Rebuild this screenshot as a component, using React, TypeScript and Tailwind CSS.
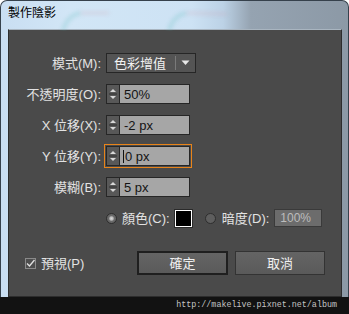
import React from "react";

const FONT = '"Liberation Sans","Noto Sans CJK TC",sans-serif';

function Spinner() {
  return (
    <div className="w-[14px] h-[20px] border border-[#262626] bg-[#585858] flex flex-col items-center justify-center">
      <svg width="12" height="18" viewBox="0 0 12 18">
        <path d="M3 7 L6 4 L9 7 Z" fill="#d8d8d8" />
        <line x1="2" y1="9" x2="10" y2="9" stroke="#2e2e2e" strokeWidth="1" />
        <path d="M3 11 L6 14 L9 11 Z" fill="#d8d8d8" />
      </svg>
    </div>
  );
}

function SpinInput({ value, caret }: { value: string; caret?: boolean }) {
  return (
    <div className="flex w-[84px] h-[20px]">
      <Spinner />
      <div className="flex-1 h-[20px] border border-l-0 border-[#262626] bg-[#a6a6a6] flex items-center pl-[4px] text-[13px] text-[#141414] leading-none">
        {caret && <span className="w-px h-[13px] bg-[#111] mr-[1px] -ml-[1px]" />}
        {value}
      </div>
    </div>
  );
}

function Label({ children }: { children: React.ReactNode }) {
  return (
    <div className="w-[97px] pr-[5px] text-right text-[13px] text-[#e2e2e2] leading-none whitespace-nowrap">
      {children}
    </div>
  );
}

export default function App() {
  return (
    <div className="w-[349px] h-[314px] bg-white overflow-hidden flex flex-col" style={{ fontFamily: FONT }}>
      <div className="h-[297px] rounded-t-[7px] border-t border-l border-r border-[#36414c] bg-[linear-gradient(90deg,#c9def2_0%,#d2e6f6_20%,#cde2f4_55%,#bcd2e6_64%,#95a3b1_72%,#8c99a6_100%)] flex flex-col relative overflow-hidden">
        <svg className="absolute left-0 top-0" width="349" height="30" viewBox="0 0 349 30">
          <defs>
            <filter id="b" x="-20%" y="-50%" width="140%" height="200%">
              <feGaussianBlur stdDeviation="2.2" />
            </filter>
          </defs>
          <g filter="url(#b)" opacity="0.3">
            <path d="M62 30 Q66 14 80 12" stroke="#4fb6b4" strokeWidth="3" fill="none" />
            <path d="M80 12 L108 12" stroke="#d28a9a" strokeWidth="2" fill="none" />
            <path d="M168 30 Q172 14 186 12" stroke="#4fb6b4" strokeWidth="3" fill="none" />
            <path d="M186 12 L226 13" stroke="#d28a9a" strokeWidth="2" fill="none" />
          </g>
        </svg>
        <div className="h-[28px] pl-[7px] pt-[6px] text-[12px] text-black leading-none relative">製作陰影</div>
        <div className="flex h-[268px]">
          <div className="w-[7px]" />
          <div className="w-[334px] h-[268px] border border-[#2d2d2d] border-t-[#a9b5c0] bg-[#4a4a4a] flex flex-col pt-[23px]">
            {/* 模式 */}
            <div className="flex items-center h-[20px]">
              <Label>模式(M):</Label>
              <div className="w-[90px] h-[20px] border border-[#262626] bg-[#545454] flex items-center text-[13px] text-[#f2f2f2] leading-none">
                <span className="pl-[7px] flex-1">色彩增值</span>
                <span className="w-px h-[14px] bg-[#7a7a7a] mr-[5px]" />
                <svg width="9" height="6" viewBox="0 0 9 6" className="mr-[5px]">
                  <path d="M0.5 0.5 L8.5 0.5 L4.5 5 Z" fill="#e8e8e8" />
                </svg>
              </div>
            </div>
            {/* 不透明度 */}
            <div className="flex items-center h-[20px] mt-[11px]">
              <Label>不透明度(O):</Label>
              <SpinInput value="50%" />
            </div>
            {/* X */}
            <div className="flex items-center h-[20px] mt-[11px]">
              <Label>X 位移(X):</Label>
              <SpinInput value="-2 px" />
            </div>
            {/* Y */}
            <div className="flex items-center h-[20px] mt-[11px]">
              <Label>Y 位移(Y):</Label>
              <div className="outline-1 outline-offset-1 outline-[#e8841a]">
                <SpinInput value="0 px" caret />
              </div>
            </div>
            {/* 模糊 */}
            <div className="flex items-center h-[20px] mt-[11px]">
              <Label>模糊(B):</Label>
              <SpinInput value="5 px" />
            </div>
            {/* color row */}
            <div className="flex items-center h-[18px] mt-[12px]">
              <div className="w-[97px]" />
              <div className="w-[11px] h-[11px] rounded-full border border-[#2e2e2e] bg-[radial-gradient(circle,#d8d8d8_0%,#bdbdbd_25%,#6a6a6a_45%,#5e5e5e_100%)]" />
              <span className="ml-[5px] text-[13px] text-[#e2e2e2] leading-none">顏色(C):</span>
              <div className="ml-[5px] w-[17px] h-[17px] border border-white bg-black outline-1 outline-[#2a2a2a]" />
              <div className="ml-[13px] w-[11px] h-[11px] rounded-full border border-[#2e2e2e] bg-[#5e5e5e]" />
              <span className="ml-[6px] text-[13px] text-[#e2e2e2] leading-none">暗度(D):</span>
              <div className="ml-[5px] w-[48px] h-[18px] border border-[#3a3a3a] bg-[#6c6c6c] flex items-center pl-[5px] text-[12px] text-[#bcbcbc] leading-none">
                100%
              </div>
            </div>
            {/* bottom row */}
            <div className="flex items-center h-[24px] mt-[24px]">
              <div className="w-[128px] flex items-center pl-[16px]">
                <div className="w-[11px] h-[11px] border border-[#8a8a8a] bg-[#4e4e4e] flex items-center justify-center">
                  <svg width="9" height="9" viewBox="0 0 9 9">
                    <path d="M1 4.5 L3.5 7 L8.5 1" stroke="#e0e0e0" strokeWidth="1.4" fill="none" />
                  </svg>
                </div>
                <span className="ml-[5px] text-[13px] text-[#e2e2e2] leading-none">預視(P)</span>
              </div>
              <div className="w-[91px] h-[24px] border-2 border-[#1f1f1f] bg-[linear-gradient(180deg,#646464,#5a5a5a)] flex items-center justify-center text-[13px] text-[#f0f0f0] leading-none">
                確定
              </div>
              <div className="ml-[7px] w-[90px] h-[24px] border border-[#333333] bg-[linear-gradient(180deg,#646464,#5a5a5a)] flex items-center justify-center text-[13px] text-[#f0f0f0] leading-none">
                取消
              </div>
            </div>
          </div>
          <div className="flex-1" />
        </div>
      </div>
      <div className="h-[17px] bg-[#121212] flex items-center justify-end pr-[12px]">
        <span className="text-[8.4px] text-[#c4c4c4] leading-none" style={{ fontFamily: '"Liberation Mono",monospace' }}>
          http://makelive.pixnet.net/album
        </span>
      </div>
    </div>
  );
}
